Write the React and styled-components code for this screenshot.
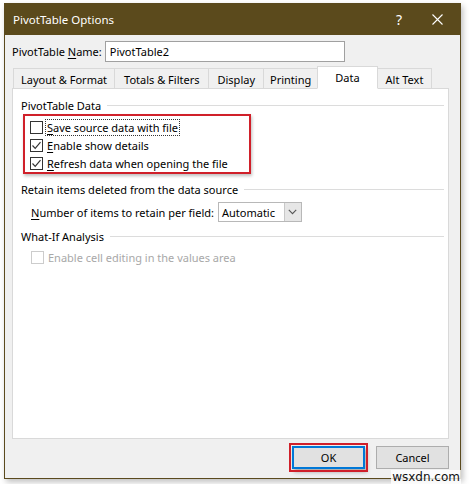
import React from "react";
import styled, { createGlobalStyle } from "styled-components";

const Global = createGlobalStyle`
  html, body { margin: 0; padding: 0; background: #ffffff; }
  body { font-family: "Noto Sans", "Open Sans", sans-serif; font-size: 11px; color: #000; }
`;

const Page = styled.div`
  width: 469px;
  height: 484px;
  position: relative;
  overflow: hidden;
  background: #fff;
`;

const Window = styled.div`
  margin: 3px 0 0 4px;
  width: 455px;
  height: 474px;
  border: 1px solid #5b4a1e;
  background: #f0f0f0;
  box-shadow: 2px 3px 6px rgba(0, 0, 0, 0.25);
  display: flex;
  flex-direction: column;
`;

const TitleBar = styled.div`
  height: 31px;
  background: #5b4a1c;
  color: #fff;
  display: flex;
  align-items: center;
  padding-left: 8px;
  font-size: 11.5px;
`;

const Title = styled.div`
  flex: 1;
  margin-top: -1px;
`;

const TitleButton = styled.div`
  width: ${(p) => p.w}px;
  height: 31px;
  display: flex;
  align-items: center;
  justify-content: center;
  font-size: 14px;
`;

const Body = styled.div`
  flex: 1;
  display: flex;
  flex-direction: column;
  padding: 6px 11px 0 7px;
`;

const NameRow = styled.div`
  display: flex;
  align-items: center;
  gap: 3px;
  height: 21px;
`;

const U = styled.span`
  text-decoration: underline;
  text-underline-offset: 2px;
`;

const Input = styled.div`
  width: 234px;
  height: 19px;
  border: 1px solid #a0a0a0;
  background: #fff;
  display: flex;
  align-items: center;
  padding-left: 4px;
  box-sizing: content-box;
`;

const Tabs = styled.div`
  display: flex;
  align-items: flex-end;
  margin-top: 4px;
  padding-left: 2px;
  height: 22px;
  position: relative;
  z-index: 1;
`;

const Tab = styled.div`
  height: ${(p) => (p.active ? 23 : 20)}px;
  box-sizing: border-box;
  padding: 0 ${(p) => (p.active ? 17 : p.px || 8)}px;
  border: 1px solid #d9d9d9;
  border-bottom: ${(p) => (p.active ? "1px solid #fff" : "none")};
  margin-left: -1px;
  background: ${(p) => (p.active ? "#fff" : "#f0f0f0")};
  display: flex;
  align-items: center;
  padding-top: ${(p) => (p.active ? 0 : 1)}px;
  margin-bottom: ${(p) => (p.active ? -1 : 0)}px;
  white-space: nowrap;
`;

const Panel = styled.div`
  height: 351px;
  background: #fff;
  border: 1px solid #d9d9d9;
  padding: 8px 4px 0 8px;
  box-sizing: border-box;
  display: flex;
  flex-direction: column;
`;

const GroupHead = styled.div`
  display: flex;
  align-items: center;
  gap: 6px;
  height: 17px;
  margin-top: ${(p) => p.mt || 0}px;
  &::after {
    content: "";
    flex: 1;
    height: 1px;
    background: #dcdcdc;
  }
`;

const Highlight = styled.div`
  margin: 0 0 0 2px;
  width: 228px;
  height: 60px;
  box-sizing: border-box;
  border: 2px solid #d0202a;
  box-shadow: 1px 2px 3px rgba(0, 0, 0, 0.25);
  padding: 2px 0 0 5px;
  display: flex;
  flex-direction: column;
`;

const CheckRow = styled.div`
  display: flex;
  align-items: center;
  gap: 3px;
  height: 19px;
  color: ${(p) => (p.disabled ? "#a8a8a8" : "#000")};
  padding-left: ${(p) => p.pl || 0}px;
  margin-top: ${(p) => p.mt || 0}px;
`;

const Box = styled.div`
  width: 13px;
  height: 13px;
  box-sizing: border-box;
  border: 1px solid ${(p) => (p.disabled ? "#cccccc" : "#333")};
  background: #fff;
  display: flex;
  align-items: center;
  justify-content: center;
`;

const Label = styled.span`
  outline: ${(p) => (p.focus ? "1px dotted #333" : "none")};
  padding: 0 1px;
`;

const SelectRow = styled.div`
  display: flex;
  align-items: center;
  gap: 4px;
  height: 22px;
  padding-left: 10px;
  margin-top: 3px;
`;

const Select = styled.div`
  width: 82px;
  height: 18px;
  border: 1px solid #b8b8b8;
  background: #fff;
  display: flex;
  align-items: center;
  box-sizing: content-box;
`;

const SelectText = styled.div`
  flex: 1;
  padding-left: 3px;
`;

const SelectArrow = styled.div`
  width: 16px;
  height: 18px;
  background: #e6e6e6;
  border-left: 1px solid #c8c8c8;
  display: flex;
  align-items: center;
  justify-content: center;
`;

const Footer = styled.div`
  display: flex;
  justify-content: flex-end;
  gap: 11px;
  padding-top: 7px;
`;

const Button = styled.div`
  width: 73px;
  height: 23px;
  box-sizing: border-box;
  border: ${(p) => (p.primary ? "2px solid #0078d7" : "1px solid #adadad")};
  background: #e1e1e1;
  display: flex;
  align-items: center;
  justify-content: center;
  ${(p) =>
    p.marked &&
    `outline: 2px solid #d0202a; outline-offset: 1px; box-shadow: 2px 3px 4px rgba(0,0,0,0.3);`}
`;

const Watermark = styled.div`
  position: absolute;
  right: 8px;
  bottom: 0px;
  font-family: "DejaVu Sans", sans-serif;
  font-size: 12px;
  color: #111;
  background: rgba(255, 255, 255, 0.8);
  padding: 0 1px;
  line-height: 14px;
`;

const Check = () => (
  <svg width="11" height="11" viewBox="0 0 11 11">
    <path d="M1.5 5.5 L4.2 8.3 L9.5 2.2" fill="none" stroke="#333" strokeWidth="1.2" />
  </svg>
);

const Chevron = () => (
  <svg width="9" height="6" viewBox="0 0 9 6">
    <path d="M0.8 0.8 L4.5 4.6 L8.2 0.8" fill="none" stroke="#555" strokeWidth="1.1" />
  </svg>
);

const CloseIcon = () => (
  <svg width="11" height="11" viewBox="0 0 11 11">
    <path d="M0.5 0.5 L10.5 10.5 M10.5 0.5 L0.5 10.5" stroke="#fff" strokeWidth="1.1" />
  </svg>
);

export default function App() {
  return (
    <Page>
      <Global />
      <Window>
        <TitleBar>
          <Title>PivotTable Options</Title>
          <TitleButton w={30}>?</TitleButton>
          <TitleButton w={46}>
            <CloseIcon />
          </TitleButton>
        </TitleBar>
        <Body>
          <NameRow>
            <span>
              PivotTable <U>N</U>ame:
            </span>
            <Input>PivotTable2</Input>
          </NameRow>
          <Tabs>
            <Tab px={7}>Layout &amp; Format</Tab>
            <Tab px={9}>Totals &amp; Filters</Tab>
            <Tab>Display</Tab>
            <Tab px={6}>Printing</Tab>
            <Tab active>Data</Tab>
            <Tab>Alt Text</Tab>
          </Tabs>
          <Panel>
            <GroupHead>PivotTable Data</GroupHead>
            <Highlight>
              <CheckRow>
                <Box />
                <Label focus>
                  <U>S</U>ave source data with file
                </Label>
              </CheckRow>
              <CheckRow>
                <Box>
                  <Check />
                </Box>
                <Label>
                  <U>E</U>nable show details
                </Label>
              </CheckRow>
              <CheckRow>
                <Box>
                  <Check />
                </Box>
                <Label>
                  <U>R</U>efresh data when opening the file
                </Label>
              </CheckRow>
            </Highlight>
            <GroupHead mt={7}>Retain items deleted from the data source</GroupHead>
            <SelectRow>
              <span>
                <U>N</U>umber of items to retain per field:
              </span>
              <Select>
                <SelectText>Automatic</SelectText>
                <SelectArrow>
                  <Chevron />
                </SelectArrow>
              </Select>
            </SelectRow>
            <GroupHead mt={5}>What-If Analysis</GroupHead>
            <CheckRow disabled pl={10} mt={3}>
              <Box disabled />
              <Label>Enable cell editing in the values area</Label>
            </CheckRow>
          </Panel>
          <Footer>
            <Button primary marked>
              OK
            </Button>
            <Button>Cancel</Button>
          </Footer>
        </Body>
      </Window>
      <Watermark>wsxdn.com</Watermark>
    </Page>
  );
}
